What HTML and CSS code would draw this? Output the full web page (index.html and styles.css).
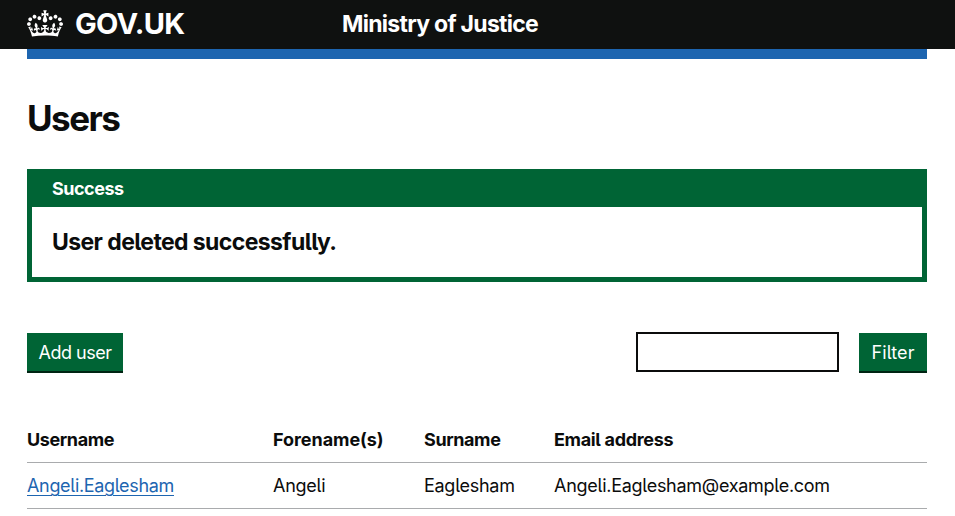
FILE: index.html
```html
<!DOCTYPE html>
<html lang="en">
<head>
<meta charset="utf-8">
<title>Users</title>
<link rel="stylesheet" href="styles.css">
</head>
<body>
<header class="header">
  <div class="container header-row">
    <a class="brand" href="#">
      <svg class="crown" viewBox="0 0 132 97" aria-hidden="true"><path fill="currentColor" d="M25 30.2c3.5 1.5 7.7-.2 9.1-3.7 1.5-3.6-.2-7.8-3.9-9.2-3.6-1.4-7.6.3-9.1 3.9-1.4 3.5.3 7.5 3.9 9zM9 39.5c3.6 1.5 7.8-.2 9.2-3.7 1.5-3.6-.2-7.8-3.9-9.1-3.6-1.5-7.6.2-9.1 3.8-1.4 3.5.3 7.5 3.8 9zM4.4 57.2c3.5 1.5 7.7-.2 9.1-3.8 1.5-3.6-.2-7.7-3.9-9.1-3.5-1.5-7.6.3-9.1 3.8-1.4 3.5.3 7.6 3.9 9.1zm38.3-21.4c3.5 1.5 7.7-.2 9.1-3.8 1.5-3.6-.2-7.7-3.9-9.1-3.6-1.5-7.6.3-9.1 3.8-1.3 3.6.4 7.7 3.9 9.1zm64.4-5.6c-3.6 1.5-7.8-.2-9.1-3.7-1.5-3.6.2-7.8 3.8-9.2 3.6-1.4 7.7.3 9.2 3.9 1.3 3.5-.4 7.5-3.9 9zm15.9 9.3c-3.6 1.5-7.7-.2-9.1-3.7-1.5-3.6.2-7.8 3.7-9.1 3.6-1.5 7.7.2 9.2 3.8 1.5 3.5-.3 7.5-3.8 9zm4.7 17.7c-3.6 1.5-7.8-.2-9.2-3.8-1.5-3.6.2-7.7 3.9-9.1 3.6-1.5 7.7.3 9.2 3.8 1.3 3.5-.4 7.6-3.9 9.1zM89.3 35.8c-3.6 1.5-7.8-.2-9.2-3.8-1.4-3.6.2-7.7 3.9-9.1 3.6-1.5 7.7.3 9.2 3.8 1.4 3.6-.3 7.7-3.9 9.1zM69.7 17.7l8.9 4.7V9.3l-8.9 2.8c-.2-.3-.5-.6-.9-.9L72.4 0H59.6l3.5 11.2c-.3.3-.6.5-.9.9l-8.8-2.8v13.1l8.8-4.7c.3.3.6.7.9.9l-5 15.4v.1c-.2.8-.4 1.6-.4 2.4 0 4.1 3.1 7.5 7 8.1h.2c.3 0 .7.1 1 .1.4 0 .7 0 1-.1h.2c4-.6 7.1-4.1 7.1-8.1 0-.8-.1-1.7-.4-2.4V34l-5.1-15.4c.4-.2.7-.6 1-.9zM66 92.8c16.9 0 32.8 1.1 47.1 3.2 4-16.9 8.9-26.7 14-33.5l-9.6-3.4c1 4.9 1.1 7.2 0 10.2-1.5-1.4-3-4.3-4.2-8.7L108.6 76c2.8-2 5-3.2 7.5-3.3-4.4 9.4-10 11.9-13.6 11.2-4.3-.8-6.3-4.6-5.6-7.9 1-4.7 5.7-5.9 8-.5 4.3-8.7-3-11.4-7.6-8.8 7.1-7.2 7.9-13.5 2.1-21.1-8 6.1-8.1 12.3-4.5 20.8-4.7-5.4-12.1-2.5-9.5 6.2 3.4-5.2 7.9-2 7.2 3.1-.6 4.3-6.4 7.8-13.5 7.2-10.3-.9-10.9-8-11.2-13.8 2.5-.5 7.1 1.8 11 7.3L80.2 60c-4.1 4.4-8 5.3-12.3 5.4 1.4-4.4 8-11.6 8-11.6H55.5s6.4 7.2 7.9 11.6c-4.2-.1-8-1-12.3-5.4l1.4 16.4c3.9-5.5 8.5-7.7 10.9-7.3-.3 5.8-.9 12.8-11.1 13.8-7.2.6-12.9-2.9-13.5-7.2-.7-5 3.8-8.3 7.1-3.1 2.7-8.7-4.6-11.6-9.4-6.2 3.7-8.5 3.6-14.7-4.6-20.8-5.8 7.6-5 13.9 2.2 21.1-4.7-2.6-11.9.1-7.7 8.8 2.3-5.5 7.1-4.2 8.1.5.7 3.3-1.3 7.1-5.7 7.9-3.5.7-9-1.8-13.5-11.2 2.5.1 4.7 1.3 7.5 3.3l-4.7-15.4c-1.2 4.4-2.7 7.2-4.3 8.7-1.1-3-.9-5.3 0-10.2l-9.5 3.4c5 6.9 9.9 16.7 14 33.5 14.8-2.1 30.8-3.2 47.7-3.2z"/></svg>
      <span class="brand-name">GOV.UK</span>
    </a>
    <span class="service-name">Ministry of Justice</span>
  </div>
</header>
<main class="container">
  <div class="header-bar"></div>
  <h1 class="title">Users</h1>
  <section class="banner">
    <h2 class="banner-title">Success</h2>
    <div class="banner-content">User deleted successfully.</div>
  </section>
  <form class="toolbar">
    <button class="button button-add" type="button">Add user</button>
    <input class="input" type="text" aria-label="Filter users">
    <button class="button button-filter" type="button">Filter</button>
  </form>
  <table class="table">
    <colgroup><col class="col-username"><col class="col-forename"><col class="col-surname"><col></colgroup>
    <thead>
      <tr><th>Username</th><th class="h-forename">Forename(s)</th><th>Surname</th><th class="h-email">Email address</th></tr>
    </thead>
    <tbody>
      <tr><td><a class="link" href="#">Angeli.Eaglesham</a></td><td>Angeli</td><td>Eaglesham</td><td>Angeli.Eaglesham@example.com</td></tr>
    </tbody>
  </table>
</main>
</body>
</html>
```
FILE: styles.css
```css
* { box-sizing: border-box; }
body {
  margin: 0;
  background: #fff;
  color: #0b0c0c;
  font-family: Inter, "Noto Sans", sans-serif;
  font-size: 18px;
  line-height: 25px;
  font-feature-settings: "cv05" 1;
  overflow: hidden;
}
.container { width: 900px; margin-left: 27px; }
.header { height: 49px; background: #0f1110; color: #fff; }
.header-row { display: flex; align-items: center; height: 47px; }
.brand { display: flex; align-items: center; width: 315px; color: inherit; text-decoration: none; }
.crown { width: 36px; height: 27px; margin-right: 12px; }
.brand-name { font-size: 29px; font-weight: 700; letter-spacing: -0.7px; line-height: 30px; }
.service-name { padding-top: 2px; font-size: 23px; font-weight: 700; letter-spacing: -0.72px; }
.header-bar { height: 10px; background: #1d65b0; }
.title { margin: 39px 0 31px; font-size: 35px; line-height: 40px; font-weight: 700; letter-spacing: -1.5px; }
.banner { height: 113px; border: 5px solid #006435; background: #fff; }
.banner-title { height: 33px; margin: 0; padding: 2px 20px 6px; background: #006435; color: #fff; font-size: 18px; line-height: 25px; font-weight: 700; letter-spacing: -0.5px; }
.banner-content { padding: 20px; font-size: 23px; line-height: 30px; font-weight: 700; letter-spacing: -0.6px; }
.toolbar { display: flex; align-items: flex-start; margin: 50px 0 0; }
.button { height: 38px; margin: 1px 0 0; padding: 0; border: 0; background: #006435; box-shadow: 0 2px 0 #002413; color: #fff; font: inherit; font-feature-settings: inherit; text-align: center; }
.button-add { width: 96px; letter-spacing: -0.5px; }
.button-filter { width: 68px; letter-spacing: 0.1px; }
.input { width: 203px; height: 40px; margin: 0 20px 0 auto; border: 2px solid #0b0c0c; border-radius: 0; }
.table { width: 100%; margin-top: 45px; border-collapse: separate; border-spacing: 0; table-layout: fixed; }
.col-username { width: 246px; }
.col-forename { width: 151px; }
.col-surname { width: 130px; }
.table th, .table td { height: 46px; padding: 0; border-bottom: 1px solid #a9abad; text-align: left; font-weight: 400; white-space: nowrap; }
.table th { font-weight: 700; letter-spacing: -0.4px; }
.table .h-forename { letter-spacing: -0.05px; }
.table .h-email { letter-spacing: -0.33px; }
.table td { letter-spacing: -0.28px; }
.link { color: #1d65b0; letter-spacing: -0.33px; text-decoration-thickness: 1px; text-underline-offset: 3px; }
```
